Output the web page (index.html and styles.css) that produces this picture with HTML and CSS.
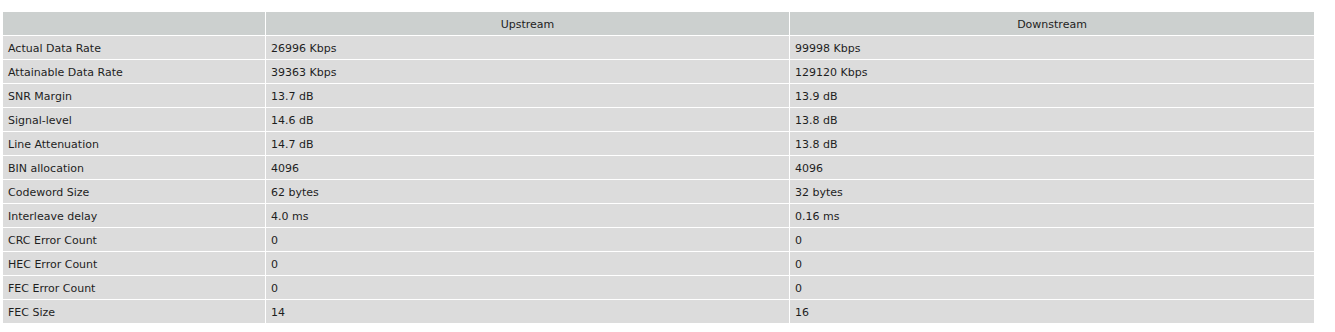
FILE: index.html
```html
<!DOCTYPE html>
<html>
<head>
<meta charset="utf-8">
<link rel="stylesheet" href="styles.css">
</head>
<body>
<table class="stats">
  <colgroup>
    <col class="c-label">
    <col class="c-up">
    <col class="c-down">
  </colgroup>
  <thead>
    <tr><th></th><th>Upstream</th><th>Downstream</th></tr>
  </thead>
  <tbody>
    <tr><td>Actual Data Rate</td><td>26996 Kbps</td><td>99998 Kbps</td></tr>
    <tr><td>Attainable Data Rate</td><td>39363 Kbps</td><td>129120 Kbps</td></tr>
    <tr><td>SNR Margin</td><td>13.7 dB</td><td>13.9 dB</td></tr>
    <tr><td>Signal-level</td><td>14.6 dB</td><td>13.8 dB</td></tr>
    <tr><td>Line Attenuation</td><td>14.7 dB</td><td>13.8 dB</td></tr>
    <tr><td>BIN allocation</td><td>4096</td><td>4096</td></tr>
    <tr><td>Codeword Size</td><td>62 bytes</td><td>32 bytes</td></tr>
    <tr><td>Interleave delay</td><td>4.0 ms</td><td>0.16 ms</td></tr>
    <tr><td>CRC Error Count</td><td>0</td><td>0</td></tr>
    <tr><td>HEC Error Count</td><td>0</td><td>0</td></tr>
    <tr><td>FEC Error Count</td><td>0</td><td>0</td></tr>
    <tr><td>FEC Size</td><td>14</td><td>16</td></tr>
  </tbody>
</table>
</body>
</html>
```
FILE: styles.css
```css
html, body {
  margin: 0;
  padding: 0;
  background: #ffffff;
}
body {
  padding: 11px 0 0 2px;
  font-family: "DejaVu Sans", Verdana, sans-serif;
  font-size: 11px;
  color: #1e1e1e;
}
.stats {
  border-collapse: separate;
  border-spacing: 1px;
  width: 1313px;
  table-layout: fixed;
}
.c-label { width: 262px; }
.c-up { width: 523px; }
.c-down { width: 524px; }
.stats th,
.stats td {
  height: 23px;
  padding: 1px 5px 0;
  box-sizing: border-box;
  vertical-align: middle;
  white-space: nowrap;
}
.stats th {
  background: #ccd0cf;
  font-weight: normal;
  text-align: center;
}
.stats td {
  background: #dcdcdc;
  text-align: left;
}
```
